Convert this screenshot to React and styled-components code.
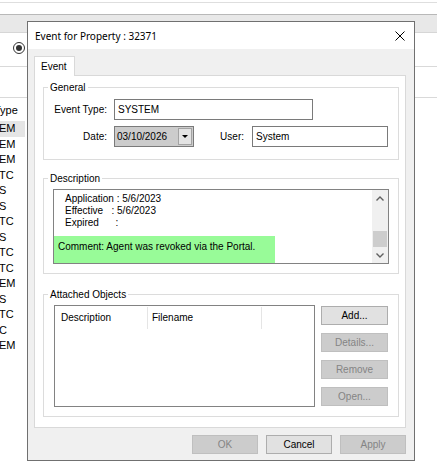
import React from 'react';
import styled, { createGlobalStyle } from 'styled-components';

const GlobalStyle = createGlobalStyle`
  html, body { margin: 0; padding: 0; background: #fff; }
  body {
    font-family: "Liberation Sans", Arial, sans-serif;
    font-size: 10px;
    color: #000;
  }
  * { box-sizing: border-box; }
`;

const Desktop = styled.div`
  position: relative;
  width: 437px;
  height: 474px;
  overflow: hidden;
  background: #fff;
`;

/* ---------- window behind the dialog ---------- */

const BackWindow = styled.div`
  display: flex;
  flex-direction: column;
`;

const TopRule = styled.div`
  height: 1px;
  margin-top: 2px;
  background: #dedede;
`;

const ToolBand = styled.div`
  margin-top: 11px;
  height: 19px;
  background: #e8e8e8;
  border-top: 1px solid #b8b8b8;
  border-bottom: 1px solid #d6d6d6;
`;

const RadioStrip = styled.div`
  height: 34px;
  padding: 9px 0 0 13px;
  border-bottom: 1px solid #d9d9d9;
`;

const Radio = styled.span`
  width: 12px;
  height: 12px;
  border-radius: 50%;
  border: 1px solid #333;
  background: #fff;
  display: flex;
  align-items: center;
  justify-content: center;

  &::after {
    content: '';
    width: 6px;
    height: 6px;
    border-radius: 50%;
    background: #333;
  }
`;

const BlankStrip = styled.div`
  height: 31px;
  border-bottom: 1px solid #d9d9d9;
`;

const TypeList = styled.div`
  width: 25px;
  overflow: hidden;
  display: flex;
  flex-direction: column;
  font-size: 11px;
  padding-top: 4px;
`;

const TypeHead = styled.div`
  line-height: 16px;
  margin: 0 0 3px -6px;
  white-space: nowrap;
`;

const TypeRow = styled.div`
  height: 15.5px;
  line-height: 15.5px;
  white-space: nowrap;
  text-indent: -1px;
  background: ${p => (p.$selected ? '#e5e5e5' : 'transparent')};
`;

/* ---------- dialog ---------- */

const Dialog = styled.div`
  position: absolute;
  left: 27px;
  top: 21px;
  width: 388px;
  height: 440px;
  border: 1px solid #707070;
  background: #f0f0f0;
  display: flex;
  flex-direction: column;
`;

const TitleBar = styled.div`
  height: 27px;
  flex: none;
  background: #fff;
  display: flex;
  align-items: center;
  justify-content: space-between;
  padding: 0 9px 0 7px;
  font-family: "Noto Sans", "Open Sans", sans-serif;
  font-size: 10px;
`;

const DialogBody = styled.div`
  flex: 1;
  display: flex;
  flex-direction: column;
  padding: 7px 8px 6px 6px;
`;

const TabStrip = styled.div`
  display: flex;
`;

const Tab = styled.div`
  position: relative;
  z-index: 1;
  width: 41px;
  height: 20px;
  margin-bottom: -1px;
  padding-left: 6px;
  line-height: 19px;
  background: #fff;
  border: 1px solid #d9d9d9;
  border-bottom: none;
`;

const TabPanel = styled.div`
  flex: 1;
  background: #fff;
  border: 1px solid #d9d9d9;
  padding: 5px 6px 0 8px;
  display: flex;
  flex-direction: column;
`;

const Group = styled.fieldset`
  margin: ${p => p.$gap || 0}px 0 0 0;
  padding: 0;
  min-width: 0;
  border: 1px solid #dcdcdc;
`;

const Legend = styled.legend`
  margin-left: 4px;
  padding: 0 2px;
  line-height: 13px;
  font-size: 10px;
`;

const GeneralBody = styled.div`
  display: flex;
  flex-direction: column;
  gap: 6px;
  padding: 5px 0 12px 0;
`;

const FieldRow = styled.div`
  display: flex;
  align-items: center;
`;

const FieldLabel = styled.label`
  width: ${p => p.$width}px;
  padding-right: ${p => p.$pad}px;
  text-align: right;
  flex: none;
`;

const TextBox = styled.div`
  width: ${p => p.$width}px;
  height: 21px;
  border: 1px solid #7a7a7a;
  background: #fff;
  padding-left: 3px;
  line-height: 19px;
  white-space: nowrap;
`;

const DatePicker = styled.div`
  width: 80px;
  height: 21px;
  border: 1px solid #7a7a7a;
  background: #cccccc;
  display: flex;
  align-items: center;
  padding: 1px 1px 1px 2px;
`;

const DateText = styled.span`
  flex: 1;
  line-height: 17px;
`;

const DropButton = styled.span`
  width: 14px;
  height: 17px;
  background: #e3e3e3;
  border: 1px solid #a3a3a3;
  display: flex;
  align-items: center;
  justify-content: center;

  &::after {
    content: '';
    border-left: 3px solid transparent;
    border-right: 3px solid transparent;
    border-top: 3px solid #000;
  }
`;

const DescBody = styled.div`
  padding: 4px 0 9px 9px;
`;

const MemoBox = styled.div`
  width: 336px;
  height: 75px;
  border: 1px solid #828282;
  background: #fff;
  display: flex;
`;

const MemoText = styled.div`
  flex: 1;
  overflow: hidden;
  padding-top: 3px;
  display: flex;
  flex-direction: column;
`;

const MemoLine = styled.div`
  line-height: 12px;
  padding-left: 11px;
  white-space: pre;
`;

const Highlight = styled.div`
  width: 221px;
  margin-top: 7px;
  flex: 1;
  background: #98fb98;
  padding: 5px 0 0 4px;
  line-height: 12px;
  white-space: nowrap;
`;

const ScrollBar = styled.div`
  width: 16px;
  background: #f0f0f0;
  display: flex;
  flex-direction: column;
`;

const ScrollArrow = styled.div`
  height: 16px;
  display: flex;
  align-items: center;
  justify-content: center;
`;

const ScrollTrack = styled.div`
  flex: 1;
  display: flex;
  flex-direction: column;
  justify-content: flex-end;
  align-items: center;
`;

const ScrollThumb = styled.div`
  width: 14px;
  height: 16px;
  background: #cdcdcd;
`;

const AttachBody = styled.div`
  display: flex;
  gap: 6px;
  padding: 4px 0 9px 10px;
`;

const ListView = styled.div`
  width: 261px;
  height: 102px;
  border: 1px solid #828282;
  background: #fff;
`;

const ListHeader = styled.div`
  display: flex;
  height: 22px;
  margin-top: 1px;
`;

const HeaderCell = styled.div`
  width: ${p => p.$width}px;
  padding-left: ${p => p.$pad}px;
  line-height: 22px;
  border-right: 1px solid #e5e5e5;
`;

const SideButtons = styled.div`
  display: flex;
  flex-direction: column;
  gap: 8px;
  padding-top: 1px;
`;

const Button = styled.button`
  width: ${p => p.$width || 66}px;
  height: 19px;
  padding: 0;
  font-family: "Liberation Sans", Arial, sans-serif;
  font-size: 10px;
  color: ${p => (p.disabled ? '#848484' : '#000')};
  background: ${p => (p.disabled ? '#cccccc' : '#e1e1e1')};
  border: 1px solid ${p => (p.disabled ? '#bfbfbf' : '#adadad')};
`;

const Footer = styled.div`
  display: flex;
  justify-content: flex-end;
  gap: 8px;
  margin-top: 7px;
`;

const CloseIcon = () => (
  <svg width="10" height="10" viewBox="0 0 10 10">
    <path d="M0.5 0.5 L9.5 9.5 M9.5 0.5 L0.5 9.5" stroke="#000" strokeWidth="1" fill="none" />
  </svg>
);

const Chevron = ({ up }) => (
  <svg width="8" height="5" viewBox="0 0 8 5">
    <path
      d={up ? 'M0.5 4.5 L4 1 L7.5 4.5' : 'M0.5 0.5 L4 4 L7.5 0.5'}
      stroke="#606060"
      strokeWidth="1.4"
      fill="none"
    />
  </svg>
);

const types = ['EM', 'EM', 'EM', 'TC', 'S', 'S', 'TC', 'S', 'TC', 'TC', 'EM', 'S', 'TC', 'C', 'EM'];

export default function App() {
  return (
    <Desktop>
      <GlobalStyle />
      <BackWindow>
        <TopRule />
        <ToolBand />
        <RadioStrip>
          <Radio />
        </RadioStrip>
        <BlankStrip />
        <TypeList>
          <TypeHead>Type</TypeHead>
          {types.map((t, i) => (
            <TypeRow key={i} $selected={i === 0}>{t}</TypeRow>
          ))}
        </TypeList>
      </BackWindow>

      <Dialog>
        <TitleBar>
          <span>Event for Property : 32371</span>
          <CloseIcon />
        </TitleBar>
        <DialogBody>
          <TabStrip>
            <Tab>Event</Tab>
          </TabStrip>
          <TabPanel>
            <Group>
              <Legend>General</Legend>
              <GeneralBody>
                <FieldRow>
                  <FieldLabel $width={70} $pad={7}>Event Type:</FieldLabel>
                  <TextBox $width={199}>SYSTEM</TextBox>
                </FieldRow>
                <FieldRow>
                  <FieldLabel $width={70} $pad={7}>Date:</FieldLabel>
                  <DatePicker>
                    <DateText>03/10/2026</DateText>
                    <DropButton />
                  </DatePicker>
                  <FieldLabel $width={58} $pad={8}>User:</FieldLabel>
                  <TextBox $width={136}>System</TextBox>
                </FieldRow>
              </GeneralBody>
            </Group>

            <Group $gap={12}>
              <Legend>Description</Legend>
              <DescBody>
                <MemoBox>
                  <MemoText>
                    <MemoLine>Application : 5/6/2023</MemoLine>
                    <MemoLine>Effective   : 5/6/2023</MemoLine>
                    <MemoLine>Expired      :</MemoLine>
                    <Highlight>Comment: Agent was revoked via the Portal.</Highlight>
                  </MemoText>
                  <ScrollBar>
                    <ScrollArrow><Chevron up /></ScrollArrow>
                    <ScrollTrack>
                      <ScrollThumb />
                    </ScrollTrack>
                    <ScrollArrow><Chevron /></ScrollArrow>
                  </ScrollBar>
                </MemoBox>
              </DescBody>
            </Group>

            <Group $gap={14}>
              <Legend>Attached Objects</Legend>
              <AttachBody>
                <ListView>
                  <ListHeader>
                    <HeaderCell $width={93} $pad={6}>Description</HeaderCell>
                    <HeaderCell $width={114} $pad={4}>Filename</HeaderCell>
                  </ListHeader>
                </ListView>
                <SideButtons>
                  <Button $width={67}>Add...</Button>
                  <Button $width={67} disabled>Details...</Button>
                  <Button $width={67} disabled>Remove</Button>
                  <Button $width={67} disabled>Open...</Button>
                </SideButtons>
              </AttachBody>
            </Group>
          </TabPanel>
          <Footer>
            <Button disabled>OK</Button>
            <Button>Cancel</Button>
            <Button disabled>Apply</Button>
          </Footer>
        </DialogBody>
      </Dialog>
    </Desktop>
  );
}
